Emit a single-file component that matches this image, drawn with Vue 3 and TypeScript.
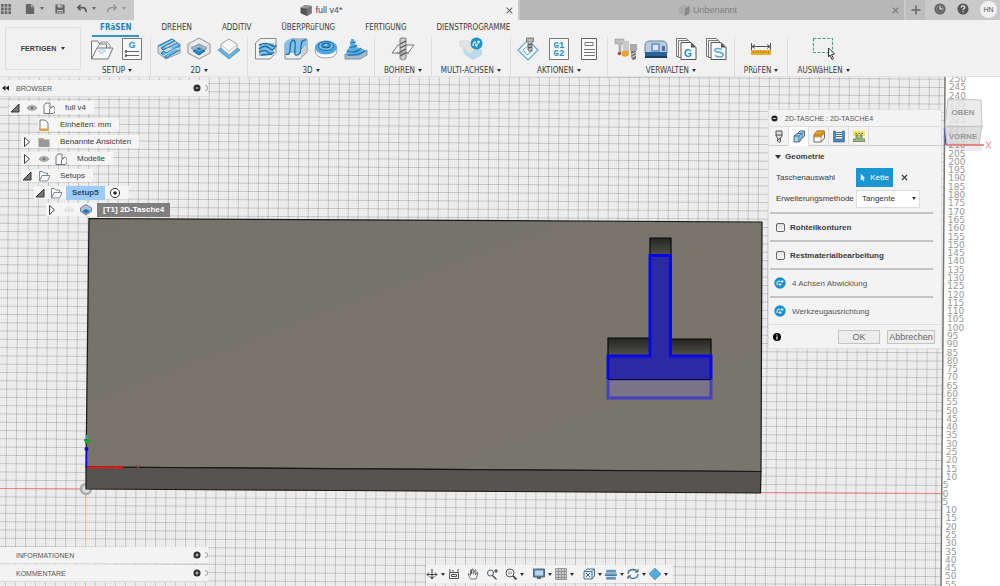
<script setup lang="ts">
import { ref } from 'vue'

interface Group {
  label: string
  icons: string[]
}

const quickIcons: Record<string, string> = {
  grid: '<g fill="#6a6a6a"><path d="M1 1h3v3H1zM5 1h3v3H5zM9 1h3v3H9zM1 5h3v3H1zM5 5h3v3H5zM9 5h3v3H9zM1 9h3v3H1zM5 9h3v3H5zM9 9h3v3H9z"/></g>',
  file: '<path d="M2 1h6l3 3v8H2z" fill="#666"/><path d="M8 1v3h3" fill="none" stroke="#ccc" stroke-width=".8"/>',
  save: '<path d="M1.500 1.500h9l1 1v9h-10z" fill="#666"/><path d="M4 2h5v3H4zM3.500 7.500h6v3h-6z" fill="#ccc"/><path d="M7 2h1v2H7zM4 9h5v1H4z" fill="#666"/>',
  undo: '<path d="M5 2 2 5l3 3M2.500 5H7q4 0 4 5" fill="none" stroke="#5d5d5d" stroke-width="1.800"/>',
  redo: '<path d="M8 2l3 3-3 3M10.500 5H6Q2 5 2 10" fill="none" stroke="#949494" stroke-width="1.600"/>',
  clock: '<circle cx="6.500" cy="6.500" r="6" fill="#5f5f5f"/><circle cx="6.500" cy="6.500" r="3.800" fill="none" stroke="#aaa" stroke-width=".6"/><path d="M6.500 3.500v3h3" fill="none" stroke="#eee" stroke-width="1.200"/>',
  help: '<circle cx="6.500" cy="6.500" r="6" fill="#555"/><path d="M4.600 5q.1-1.900 2-1.900t1.900 1.600q0 1-1.200 1.600-.7.400-.7 1.300" fill="none" stroke="#eee" stroke-width="1.300"/><circle cx="6.600" cy="9.400" r=".8" fill="#eee"/>'
}

const toolIcons: Record<string, string> = {
  setup: '<path d="M1.500 22V4h6l2 3h7v4M1.500 22 7 11h16l-5 11z" fill="#f8f8f8" stroke="#777"/><path d="M7 11l4-6h6l3 3v3" fill="none" stroke="#888" stroke-width=".9"/><path d="M8 14l5-2 3 2-5 3z" fill="#cfe6f4" stroke="#8fc4e3" stroke-width=".6"/>',
  nc: '<path d="M2.500 1.500h19v21h-19z" fill="#f7f7f7" stroke="#777"/><text x="12" y="10.500" text-anchor="middle" font-family="Liberation Sans, sans-serif" font-weight="700" font-size="9" fill="#268fd0">G</text><path d="M5 14.500h14M5 18.500h14" stroke="#666"/><path d="M6 13v3M6 17v3" stroke="#555" stroke-width="1.500"/>',
  face: '<path d="M1 9 15 2l8 5v9L9 22l-8-6z" fill="#d5dadd" stroke="#7c8a93" stroke-width=".8"/><path d="M1 9 15 2l3 2L4 11l2 2L20 6l3 3L9 16l-2-2-3 2 5 5 14-8" fill="#62b0e4" stroke="#1d74b2"/><path d="m3 10 13-7M7 14l14-7M3 16l3 3 14-8" stroke="#b4dbf3" fill="none"/>',
  pocket: '<path d="m12 1 11 6v9l-11 6L1 16V7z" fill="#e8eaec" stroke="#888" stroke-width=".9"/><path d="m12 7 8 4-8 7-8-7z" fill="#8fb8d4" stroke="#777" stroke-width=".7"/><path d="m12 11 6 3-6 4-6-4z" fill="#2187cd" stroke="#185b8c" stroke-width=".8"/><path d="M1 7l11 7 11-7" fill="none" stroke="#bbb" stroke-width=".7"/>',
  contour: '<path d="m12 5 11 8-11 9L1 13z" fill="#62b1e0" stroke="#3a9ad2" stroke-width=".8"/><path d="m12 2 8 5v4l-8 7-8-7V7z" fill="#f8f8f8" stroke="#999" stroke-width=".9"/><path d="m4 8 8 6 8-6M12 14v4" fill="none" stroke="#bbb" stroke-width=".8"/>',
  adaptive: '<path d="M1.500 6l5-4.500h15.500v14l-6 6.500H1.500z" fill="#f2f3f4" stroke="#888"/><path d="M5 8 20 6l-1 12-14 1z" fill="#83bfe6"/><path d="M5 8q7-3 12 0t5 0M5 12q6-5 10-1t6-1M5 15q6-3 9 0t6 0M7 18l11-1" fill="none" stroke="#1b6ead" stroke-width="1.500"/>',
  parallel: '<path d="M1 6l6-4h16v13l-7 7H1z" fill="#eceeef" stroke="#888"/><path d="M1 5q5-5 11-3t11 0v6q-6 12-10 9T1 18z" fill="#82c0e8"/><path d="M2 17Q6 19 6 12t3-9q3 0 2 8t2 7q4 0 4-8t5-7" fill="none" stroke="#1d6ca6" stroke-width="1.300"/><path d="m17 21 5-6V8l-5 5z" fill="#cdd0d2"/>',
  scallop: '<path d="M1 13q0 8 11 8t11-8q-1-3-3-3H4q-3 0-3 3z" fill="#fff" stroke="#999" stroke-width=".9"/><ellipse cx="12" cy="10.500" rx="11" ry="7" fill="#4ba5df"/><ellipse cx="12" cy="9" rx="7.500" ry="4.500" fill="#7fc0ea" stroke="#1869a6"/><ellipse cx="12" cy="8.500" rx="4.500" ry="2.300" fill="#3c94cf" stroke="#155985"/><ellipse cx="12" cy="8" rx="1.600" ry=".8" fill="#cfe8f7"/>',
  spiral: '<path d="m1 17 13-1 9-3v5l-7 4H1z" fill="#a8bccb" stroke="#6d8494" stroke-width=".8"/><path d="M7 2h3l1 5 3 4 5 1 3 2-7 5-13-2 1-4 3-3z" fill="#5bade2"/><path d="m6 6 6-1M5 10q5 1 8-2M3 14q9 3 14-3M3 18q11 1 18-4" fill="none" stroke="#1d70ac" stroke-width="1.200"/>',
  drill: '<path d="m1 16 6-8h16l-6 8z" fill="#fafafa" stroke="#777"/><path d="M9 1.500q3-1.500 6 0v20l-3 1.500-3-1.500z" fill="#cdcdcd" stroke="#777" stroke-width=".9"/><path d="m9 7 6-3M9 11l6-3M9 15l6-3M9 19l6-3" stroke="#555" stroke-width="1.300"/><path d="M6 16h12" stroke="#777"/>',
  multi: '<g opacity=".62"><path d="M1 4h9v5H7v6H4V9H1z" fill="#d9dcde" stroke="#bbb" stroke-width=".6"/><path d="m5 12 6 3 6-6 6 4v5l-9 5-9-6z" fill="#9acbe8"/><path d="m12 7-5 6 4 4 6-7z" fill="#e7d8ba"/></g><circle cx="17.500" cy="6.500" r="6" fill="#1b91cd"/><path d="M14 9q0-4 3-4M18 5h3M19.500 3.500v3M16 8h3M17.500 6.500V10" stroke="#d9f0fb" stroke-width="1.300" fill="none"/>',
  simulate: '<path d="m11 3 10 10-10 10L1 13z" fill="#f3f8fb" stroke="#56a5d8" stroke-width="1.100"/><path d="m16 13-6 5-4-5 6-5" fill="none" stroke="#56a5d8"/><path d="M9.500 1h7v3.500h-1.500V13l-2 2-2-2V4.500H9.500z" fill="#b5b5b5" stroke="#666" stroke-width=".8"/><path d="m11 8 4-1M11 11l4-1" stroke="#444"/>',
  post: '<path d="M2.500 1.500h19v21h-19z" fill="#f7f7f7" stroke="#777"/><text x="12" y="11" text-anchor="middle" font-family="Liberation Mono, monospace" font-weight="700" font-size="9" fill="#2a8dcc">G1</text><text x="12" y="19" text-anchor="middle" font-family="Liberation Mono, monospace" font-weight="700" font-size="9" fill="#2a8dcc">G2</text>',
  sheet: '<path d="M4.500 1.500h15v21h-15z" fill="#f9f9f9" stroke="#666"/><path d="M8 5.500h8v3H8zM7 12.500h11M7 15.500h11M7 18.500h11" fill="none" stroke="#777"/>',
  tools: '<path d="M1 2h9v5H7v8H5V7H1z" fill="#bdbdbd" stroke="#999" stroke-width=".6"/><circle cx="5.500" cy="16.500" r="1.800" fill="#d83c2e"/><path d="M9 4h6v10H9z" fill="#c9c9c9"/><path d="m8 14h7v4q-3 3-7 1z" fill="#e2a52c"/><path d="M16 7h7v7h-7z" fill="#aaa"/><path d="M17 14h5v8l-3 1-2-2z" fill="#777"/><path d="m17 18 5-3M17 21l5-3" stroke="#ddd"/>',
  machine: '<path d="M1 9q0-5 5-5h12q5 0 5 5v7H1z" fill="#b9cde0" stroke="#68829c"/><path d="M1 15h22v5H1z" fill="#2a6497"/><path d="M7 6h9v9H7z" fill="#7b9fc7"/><path d="M9 8h5v5H9z" fill="#dfe8f2"/><path d="M18 9h3v5h-3z" fill="#536bb0"/><path d="M1 19h22v2H1z" fill="#174466"/>',
  library: '<path d="M2.500 1.500h10l3 3v15h-13z" fill="#f7f7f7" stroke="#777"/><path d="M4.500 3.500h10l3 3v14h-13z" fill="#f7f7f7" stroke="#777"/><path d="M7 5.500h10l5 5v12H7z" fill="#fbfbfb" stroke="#555"/><path d="M17 5.500v5h5z" fill="#555"/><text x="14" y="20" text-anchor="middle" font-family="Liberation Sans, sans-serif" font-weight="700" font-size="10" fill="#2389cb">G</text>',
  template: '<path d="M2.500 1.500h10l3 3v15h-13z" fill="#f7f7f7" stroke="#777"/><path d="M4.500 3.500h10l3 3v14h-13z" fill="#f7f7f7" stroke="#777"/><path d="M7 5.500h10l5 5v12H7z" fill="#fbfbfb" stroke="#555"/><path d="M17 5.500v5h5z" fill="#555"/><path d="M18 12.500q-6-2-7 0t3 2.500 5 2-1 2.500q-3 1.500-7-1" fill="none" stroke="#5aa9d9" stroke-width="1.500"/>',
  measure: '<path d="M2.500 6v8M21.500 6v8M3 9.500h18M6 7.500l-3 2 3 2M18 7.500l3 2-3 2" fill="none" stroke="#555"/><path d="M2 13h20v5H2z" fill="#e9ac2a"/><path d="M4 15h16" stroke="#9c721a" stroke-dasharray="1 1.500" stroke-width="1.500"/>',
  select: '<path d="M1.500 1.500h19v14h-19z" fill="none" stroke="#4ea374" stroke-width="1.100" stroke-dasharray="3 1.500"/><path d="m16.500 11 6 6-3 .5 2 4-1.500 1-2-4.500-1.500 2z" fill="#fff" stroke="#333"/>'
}

const groups: Group[] = [
  { label: 'SETUP', icons: ['setup', 'nc'] },
  { label: '2D', icons: ['face', 'pocket', 'contour'] },
  { label: '3D', icons: ['adaptive', 'parallel', 'scallop', 'spiral'] },
  { label: 'BOHREN', icons: ['drill'] },
  { label: 'MULTI-ACHSEN', icons: ['multi'] },
  { label: 'AKTIONEN', icons: ['simulate', 'post', 'sheet'] },
  { label: 'VERWALTEN', icons: ['tools', 'machine', 'library', 'template'] },
  { label: 'PRüFEN', icons: ['measure'] },
  { label: 'AUSWäHLEN', icons: ['select'] }
]

const tabs = ['FRäSEN', 'DREHEN', 'ADDITIV', 'ÜBERPRüFUNG', 'FERTIGUNG', 'DIENSTPROGRAMME']
const activeTab = ref('FRäSEN')

const treeIcons: Record<string, string> = {
  open: '<path d="M10 2v8H2z" fill="#777" stroke="#333"/>',
  closed: '<path d="m3.500 1.500 5 4.500-5 4.500z" fill="#fafafa" stroke="#444"/>',
  eye: '<path d="M.5 6Q6-.5 11.500 6 6 12.500.5 6z" fill="#999"/><circle cx="6" cy="6" r="2.300" fill="#777" stroke="#ddd" stroke-width=".8"/>',
  eyeoff: '<path d="M.5 6Q6-.5 11.500 6 6 12.500.5 6z" fill="#e2e2e2"/><circle cx="6" cy="6" r="2" fill="#d4d4d4" stroke="#f7f7f7"/>',
  body: '<path d="M1 3.500 3 1h4v5l3-2 2 2v4l-2 1.500H1z" fill="#f8f8f8" stroke="#777"/><path d="M6.500 11V7L9 5" fill="none" stroke="#777"/>',
  units: '<path d="M2 1h5l3 3v7H2z" fill="#fff" stroke="#777"/><path d="M1 9.500h10v2H1z" fill="#dfa12c"/>',
  folder: '<path d="M.5 2H5l1 1.500h5.500V11H.5z" fill="#999"/><path d="M.5 2H5l1 1.500H.5z" fill="#c4a876"/>',
  setup: '<path d="M1.500 11V1.500h3L6 3h3.500v2.500M1.500 11 4 5.500h8L9.500 11z" fill="#fafafa" stroke="#6c8290" stroke-width=".9"/>',
  radio: '<circle cx="6" cy="6" r="4.600" fill="#fff" stroke="#333"/><circle cx="6" cy="6" r="1.800" fill="#222"/>',
  pocket: '<path d="m6 .5 5.500 3.500v3.500L6 11 .5 7.500V4z" fill="#aac4d6" stroke="#667" stroke-width=".8"/><path d="m6 5 4 2-4 3-4-3z" fill="#1f78bc"/>'
}

interface TreeRow {
  id: string
  arrow?: 'open' | 'closed'
  icons: string[]
  label: string
  after?: string
}
const tree: TreeRow[] = [
  { id: 'root', arrow: 'open', icons: ['eye', 'body'], label: 'full v4' },
  { id: 'units', icons: ['units'], label: 'Einheiten: mm' },
  { id: 'views', arrow: 'closed', icons: ['folder'], label: 'Benannte Ansichten' },
  { id: 'models', arrow: 'closed', icons: ['eye', 'body'], label: 'Modelle' },
  { id: 'setups', arrow: 'open', icons: ['setup'], label: 'Setups' },
  { id: 'setup5', arrow: 'open', icons: ['setup'], label: 'Setup5', after: 'radio' },
  { id: 'op', arrow: 'closed', icons: ['eyeoff', 'pocket'], label: '[T1] 2D-Tasche4' }
]

const dialogTabs: { name: string; icon: string }[] = [
  { name: 'Werkzeug', icon: '<path d="M3 1h6v5L7.500 8v3.500L6 12.500 4.500 11V8L3 6z" fill="#ddd" stroke="#555"/><path d="M3 5h6M4.500 10l3-2" stroke="#444"/>' },
  { name: 'Geometrie', icon: '<path d="M1 6l2.500-2H5V3l2-2h4.500v5L9.500 8H8v2l-2 2H1z" fill="#a9d1ec" stroke="#2f6287" stroke-width=".9"/><path d="M1 6h5v6M6 6l2-2M5 3.500h4V8M9 3.500 11.500 1" fill="none" stroke="#2f6287" stroke-width=".8"/>' },
  { name: 'Höhen', icon: '<path d="M1 5l3-4h7.500v7L8 12H1z" fill="#fff" stroke="#666"/><path d="m1 5 3-4h7.500L8 5zM1 5h7l3.500-4v2L8 7H1z" fill="#e7a02b" stroke="#b77818" stroke-width=".6"/><path d="M8 7v5" stroke="#777" stroke-width=".8"/>' },
  { name: 'Durchgänge', icon: '<path d="M.5 1v11h11V1H9.500v8h-7V1z" fill="#4b86c6" stroke="#335f91" stroke-width=".6"/><path d="M3 2.500h6M3 4.500h6M3 6.500h6" stroke="#3e6da0"/>' },
  { name: 'Verknüpfung', icon: '<path d="M0 1h12v5H0z" fill="#e9e45a"/><path d="M0 11.500h12V9H9V5H7v4H5V5H3v4H0z" fill="#a3bd80" stroke="#557041" stroke-width=".7"/><path d="M2 3.500h8" stroke="#777" stroke-dasharray="2 1"/>' }
]
const activeDialogTab = ref('Geometrie')
const stock = ref(false)
const rest = ref(false)
const method = ref('Tangente')

const navItems: { id: string; icon: string; menu: boolean; gap?: boolean }[] = [
  { id: 'Orbit', menu: true, icon: '<path d="M6 1v10M4 8.500 6 11l2-2.500" fill="none" stroke="#333"/><path d="M1 6.500h10M3 4.500l-2 2 2 2M9 4.500l2 2-2 2" fill="none" stroke="#444"/>' },
  { id: 'Ansehen', menu: false, icon: '<path d="M1.500 4.500h9v6h-9zM3.500 6.500h5v2h-5zM2 1v3M5 2v2M10 1v3" fill="none" stroke="#555"/>' },
  { id: 'Pan', menu: false, icon: '<path d="m3.500 11-2.500-5 1-.5 1.500 2V2h1v4l.500-5h1l.500 5L8 2h1l-.500 5L10 4.500l1 .5-2 6z" fill="#fafafa" stroke="#555" stroke-width=".8"/>' },
  { id: 'Zoom', menu: false, icon: '<circle cx="4.500" cy="5" r="3" fill="#eef4f8" stroke="#555"/><path d="m6.500 7.500 4 4M8 3h4M10 1v4" stroke="#444" stroke-width="1.200"/>' },
  { id: 'Einpassen', menu: true, icon: '<circle cx="5" cy="5" r="4" fill="#f8f8f8" stroke="#555"/><path d="M3 3.500h4v3H3z" fill="#bbb"/><path d="m8 8 3.500 3.500" stroke="#333" stroke-width="1.600"/>' },
  { id: 'Anzeige', menu: true, gap: true, icon: '<path d="M.5 1h11v8H.5z" fill="#5d81a4" stroke="#486781"/><path d="M2 2.500h8v5H2z" fill="#b7d5ec"/><path d="M4 9h4v2H4z" fill="#666"/>' },
  { id: 'Raster', menu: true, icon: '<path d="M.5.5h11v11H.5zM3.500.5v11M6.500.5v11M9.500.5v11M.5 3.500h11M.5 6.500h11M.5 9.500h11" fill="#ccc" stroke="#888" stroke-width=".8"/>' },
  { id: 'Objekt', menu: true, gap: true, icon: '<path d="M1 3.500 4 1h7.500v7L9 11H1z" fill="#e5eef5" stroke="#456f91"/><path d="M1 3.500h8V11M9 3.500 11.500 1M3 5l4 4M7 5 3 9" fill="none" stroke="#456f91"/>' },
  { id: 'Schnitt', menu: true, icon: '<path d="M1 1.500h10V4H1zM0 5h12v2.500H0zM1 8.500h10V11H1z" fill="#5a9bd0" stroke="#f3f3f3" stroke-width=".5"/><path d="M1 4h10M0 7.500h12M1 11h10" stroke="#355974" stroke-width=".8"/>' },
  { id: 'Aktualisieren', menu: true, icon: '<path d="M1 6q0-4 5-4.500 3 0 4 2M11 6q0 4-5 4.500-3 0-4-2" fill="none" stroke="#3979ab" stroke-width="1.300"/><path d="M8 4h3V1M4 8H1v3" fill="none" stroke="#444"/>' },
  { id: 'Stil', menu: true, icon: '<path d="m6 0 6 6-6 6-6-6z" fill="#55aadd" stroke="#3d8cbd" stroke-width=".6"/>' }
]

const TILT = 0.0055
const LEAN = 0.008
function rows(step: number): string {
  let d = ''
  for (let y = 489 - step * Math.ceil(420 / step); y < 600; y += step) {
    d += `M0 ${(y - 86 * TILT).toFixed(2)}L${edge(y).toFixed(1)} ${(y + 858 * TILT).toFixed(2)}`
  }
  return d
}
function columns(step: number): string {
  let d = ''
  for (let x = 86 - step * Math.ceil(90 / step); x < 940; x += step) {
    d += `M${(x + 412 * LEAN).toFixed(2)} 77L${(x - 97 * LEAN).toFixed(2)} 586`
  }
  return d
}
function edge(y: number): number {
  return 945 - (y - 77) * LEAN
}
const minorGrid = rows(8.29 / 5) + columns(2)
const majorGrid = rows(8.29) + columns(10)

const ruler = Array.from({ length: 62 }, (_, i) => {
  const value = 250 - i * 5
  const y = 82 + i * 8.29
  return { key: value, text: String(Math.abs(value)), x: edge(y) + (Math.abs(value) > 5 ? 4 : 1), y }
})
</script>

<template>
  <div class="app">
    <header class="titlebar">
      <div class="quick">
        <button aria-label="Datengruppe"><svg viewBox="0 0 13 13" v-html="quickIcons.grid" /></button>
        <button class="file" aria-label="Datei"><svg viewBox="0 0 13 13" v-html="quickIcons.file" /><i class="caret" /></button>
        <button aria-label="Speichern"><svg viewBox="0 0 13 13" v-html="quickIcons.save" /></button>
        <button aria-label="Rückgängig"><svg viewBox="0 0 13 13" v-html="quickIcons.undo" /><i class="caret" /></button>
        <button class="dim" aria-label="Wiederholen"><svg viewBox="0 0 13 13" v-html="quickIcons.redo" /><i class="caret" /></button>
      </div>
      <div class="doc current">
        <span class="doc-name">
          <svg viewBox="0 0 12 12"><path d="M0 3 5 0l7 1v8l-5 3-7-3z" fill="#555" /><path d="m0 3 5-3 7 1-5 3z" fill="#999" /><path d="m7 4 5-3v8l-5 3z" fill="#777" /></svg>
          full v4*
        </span>
        <button class="close" aria-label="Schließen"><svg viewBox="0 0 8 8"><path d="m1.500 1.500 5 5m0-5-5 5" stroke="#666" /></svg></button>
      </div>
      <div class="doc">
        <span class="doc-name">
          <svg viewBox="0 0 12 12"><path d="M0 3 5 0l7 1v8l-5 3-7-3z" fill="#aaa" /><path d="m7 4 5-3v8l-5 3z" fill="#888" /></svg>
          Unbenannt
        </span>
        <button class="close" aria-label="Schließen"><svg viewBox="0 0 8 8"><path d="m1.500 1.500 5 5m0-5-5 5" stroke="#777" /></svg></button>
      </div>
      <div class="account">
        <button class="plus" aria-label="Neu"><svg viewBox="0 0 12 12"><path d="M6 1.500v9M1.500 6h9" stroke="#666" stroke-width="1.500" /></svg></button>
        <button aria-label="Auftragsstatus"><svg viewBox="0 0 13 13" v-html="quickIcons.clock" /></button>
        <button aria-label="Hilfe"><svg viewBox="0 0 13 13" v-html="quickIcons.help" /></button>
        <button class="avatar">HN</button>
      </div>
    </header>

    <div class="ribbon">
      <button class="workspace-switch">FERTIGEN<i class="caret" /></button>
      <div class="ribbon-main">
        <nav class="tabs">
          <button v-for="t in tabs" :key="t" :class="{ active: t === activeTab }" @click="activeTab = t">{{ t }}</button>
        </nav>
        <div class="groups">
          <div v-for="g in groups" :key="g.label" class="group">
            <div class="tools">
              <button v-for="i in g.icons" :key="i" :aria-label="i"><svg viewBox="0 0 24 24" v-html="toolIcons[i]" /></button>
            </div>
            <button class="group-label">{{ g.label }}<i class="caret" /></button>
          </div>
        </div>
      </div>
    </div>

    <main class="workspace">
      <svg class="scene" viewBox="0 77 1000 509" preserveAspectRatio="xMinYMin slice">
        <defs>
          <linearGradient id="face" x1="0" x2="1" y1="0" y2="1">
            <stop offset="0" stop-color="#75726a" />
            <stop offset="0.6" stop-color="#79756b" />
            <stop offset="1" stop-color="#78756c" />
          </linearGradient>
          <linearGradient id="slot" x1="0" x2="0" y1="0" y2="1">
            <stop offset="0" stop-color="#242422" />
            <stop offset="1" stop-color="#53524c" />
          </linearGradient>
        </defs>
        <rect y="77" width="1000" height="509" fill="#fff" />
        <path d="M0 77H945L941 586H0z" fill="#f4f4f4" />
        <path :d="minorGrid" stroke="#000" stroke-opacity="0.03" fill="none" />
        <path :d="majorGrid" stroke="#000" stroke-opacity="0.16" fill="none" />
        <path d="M945 77 941 586" stroke="#777" stroke-width="1.500" />
        <path d="M0 488.500 943 493.500" stroke="#f08080" />
        <path d="M85.500 489V586M88 219l-1-22" stroke="#90ee90" />
        <circle cx="86" cy="489" r="5" fill="#ddd" stroke="#aaa" stroke-width="2.500" />
        <path d="m89 218.500 673 3.500-1 249.500L86 467z" fill="url(#face)" stroke="#181818" stroke-width="1.200" />
        <path d="m86 467 675 4.500-.5 21.500L86 489z" fill="#555450" stroke="#181818" stroke-width="1.200" />
        <path d="M86.500 467v-20" stroke="#0909f0" stroke-width="1.500" />
        <circle cx="86.500" cy="449" r="2" fill="#0909d8" />
        <path d="M86.500 435v4" stroke="#21a6c7" stroke-width="2" />
        <path d="m84 440 5 1-4 2" stroke="#0daa20" stroke-width="2" fill="none" />
        <path d="M87 467.500h34" stroke="#ed1515" stroke-width="2" />
        <path d="m119 465 5 2.500-5 2.500z" fill="#e31616" />
        <path d="m136 465 4 4m0-4-4 4" stroke="#9c3f3a" stroke-width=".8" />

        <g fill="url(#slot)" stroke="#080808" stroke-width="1.200">
          <path d="M650 238h21v18h-21z" />
          <path d="M608 338h42v18h-42z" />
          <path d="M670 339h41v17h-41z" />
        </g>
        <rect x="608" y="379" width="103" height="19" fill="#7b7386" stroke="#453fc2" stroke-width="3" />
        <path d="M650 255h20v101h41v23H608v-23h42z" fill="#2c29a4" />
        <path d="M608 379v-23h42V255.500h20.500V356H711v23" fill="none" stroke="#0808e4" stroke-width="3" />
        <path d="M608 379.500h103" stroke="#0c0c38" stroke-width="1.200" />

        <g class="ruler">
          <text v-for="r in ruler" :key="r.key" :x="r.x" :y="r.y">{{ r.text }}</text>
        </g>

        <path d="m945 128 1 17" stroke="#4a42e4" stroke-width="1.500" />
        <path d="M950 151h32v-8h-36z" fill="#999" opacity="0.2" />
        <path d="m948 99 33 1 1 27-37-1z" fill="#e6e6e6" fill-opacity="0.82" stroke="#bbb" stroke-width=".8" />
        <path d="m945 127 37-1-3 19-32-1z" fill="#d8d8d8" fill-opacity="0.85" stroke="#bbb" stroke-width=".8" />
        <path d="M946 145h38" stroke="#ec6a6a" stroke-width="1.500" />
        <g class="cube">
          <text x="963" y="115">OBEN</text>
          <text x="963" y="139">VORNE</text>
        </g>
        <path d="m986 141.500 5 7m0-7-5 7" stroke="#f19a9a" stroke-width="1.200" />
      </svg>

      <section class="browser">
        <h2 class="bar">
          <svg class="rewind" viewBox="0 0 8 6"><path d="M4 0v6L0 3zM8 0v6L4 3z" fill="#222" /></svg>
          BROWSER
          <button class="dot" aria-label="Ausblenden"><svg viewBox="0 0 8 8"><circle cx="4" cy="4" r="3.500" fill="#2d2d2d" /><path d="M2.500 4h3" stroke="#ddd" /></svg></button>
          <span class="grip" />
        </h2>
        <ul class="tree">
          <li v-for="row in tree" :key="row.id" :class="row.id">
            <button v-if="row.arrow" class="arrow" :aria-label="row.arrow"><svg viewBox="0 0 12 12" v-html="treeIcons[row.arrow]" /></button>
            <svg v-for="i in row.icons" :key="i" viewBox="0 0 12 12" v-html="treeIcons[i]" />
            <span class="name">{{ row.label }}</span>
            <svg v-if="row.after" viewBox="0 0 12 12" v-html="treeIcons[row.after]" />
          </li>
        </ul>
      </section>

      <section class="dialog">
        <h2 class="dialog-title">
          <svg viewBox="0 0 8 8"><circle cx="4" cy="4" r="3.500" fill="#222" /><path d="M2 4h4" stroke="#ddd" /></svg>
          2D-TASCHE : 2D-TASCHE4
        </h2>
        <div class="dialog-tabs">
          <button v-for="t in dialogTabs" :key="t.name" :aria-label="t.name" :class="{ active: t.name === activeDialogTab }" @click="activeDialogTab = t.name">
            <svg viewBox="0 0 12 13" v-html="t.icon" />
          </button>
        </div>
        <div class="dialog-body">
          <h3><i class="caret" />Geometrie</h3>
          <div class="field">
            <span>Taschenauswahl</span>
            <div class="control">
              <button class="chain"><svg viewBox="0 0 8 10"><path d="m1 0 6 6H4.500L6 9l-1.500 1L3 7 1 9z" fill="#e8f6fd" /></svg>Kette</button>
              <button class="clear" aria-label="Auswahl löschen"><svg viewBox="0 0 8 8"><path d="m1 1 6 6m0-6-6 6" stroke="#333" stroke-width="1.500" /></svg></button>
            </div>
          </div>
          <div class="field">
            <label for="method">Erweiterungsmethode</label>
            <div class="control select">
              <select id="method" v-model="method"><option>Tangente</option></select>
              <i class="caret" />
            </div>
          </div>
          <label class="option"><input v-model="stock" type="checkbox">Rohteilkonturen</label>
          <label class="option"><input v-model="rest" type="checkbox">Restmaterialbearbeitung</label>
          <button v-for="x in ['4 Achsen Abwicklung', 'Werkzeugausrichtung']" :key="x" class="option extension">
            <svg viewBox="0 0 12 12"><circle cx="6" cy="6" r="5.700" fill="#1b8fc6" /><path d="M3 8q-.5-4 3-4M6.500 4.500h3M8 3v3M4.500 7.500h3M6 6v3" fill="none" stroke="#e2f4fc" stroke-width="1.100" /></svg>{{ x }}
          </button>
        </div>
        <footer>
          <svg viewBox="0 0 8 8"><circle cx="4" cy="4" r="4" fill="#000" /><path d="M4 3.500V6.500M4 1.500v1" stroke="#fff" stroke-width="1.300" /></svg>
          <button class="ok">OK</button>
          <button>Abbrechen</button>
        </footer>
      </section>

      <section class="bottom-panels">
        <h2 v-for="p in ['INFORMATIONEN', 'KOMMENTARE']" :key="p" class="bar">
          {{ p }}
          <button class="dot" aria-label="Einblenden"><svg viewBox="0 0 8 8"><circle cx="4" cy="4" r="3.500" fill="#2d2d2d" /><path d="M2.500 4h3M4 2.500v3" stroke="#ddd" /></svg></button>
          <span class="grip" />
        </h2>
      </section>

      <nav class="navbar">
        <button v-for="n in navItems" :key="n.id" :aria-label="n.id" :class="{ gap: n.gap }">
          <svg viewBox="0 0 12 12" v-html="n.icon" /><i v-if="n.menu" class="caret" />
        </button>
      </nav>
    </main>
  </div>
</template>

<style>
html, body { margin: 0; overflow: hidden; }
</style>

<style scoped>
.app {
  display: flex;
  flex-direction: column;
  height: 100vh;
  font-family: "Liberation Sans", Arial, sans-serif;
  font-size: 8px;
  color: #3c3c3c;
}
.app * { box-sizing: border-box; }
button {
  display: flex;
  align-items: center;
  justify-content: center;
  padding: 0;
  border: 0;
  background: none;
  font: inherit;
  color: inherit;
  white-space: nowrap;
}
svg { display: block; flex: none; }
h2, h3, ul { margin: 0; padding: 0; }
.caret {
  flex: none;
  border: 2px solid transparent;
  border-top: 3px solid #333;
  border-bottom: 0;
}

.titlebar { display: flex; height: 20px; flex: none; background: #c9c9c9; }
.quick { display: flex; align-items: center; width: 134px; padding-bottom: 3px; gap: 10px; }
.quick svg { width: 12px; height: 12px; }
.quick button { gap: 4px; }
.quick .file { margin-left: 2px; }
.quick .caret { border-top-color: #666; }
.quick .dim .caret { border-top-color: #999; }
.doc {
  flex: 1;
  display: flex;
  align-items: center;
  padding: 0 4px;
  margin-right: 2px;
  background: #b7b7b7;
  color: #808080;
  font-size: 9px;
}
.doc.current { background: #f2f2f2; color: #484848; }
.doc-name { flex: 1; display: flex; align-items: center; justify-content: center; gap: 3px; }
.doc-name svg { width: 12px; height: 11px; }
.close svg { width: 9px; height: 9px; }
.account { display: flex; align-items: center; gap: 11px; width: 94px; padding-bottom: 2px; }
.account svg { width: 12px; height: 12px; }
.account .plus { width: 19px; height: 20px; margin: 2px -2px 0 0; background: #bdbdbd; }
.account .avatar { width: 17px; height: 17px; border-radius: 50%; background: #f1f1f1; font-size: 7px; color: #555; }

.ribbon { display: flex; flex: none; height: 57px; background: #f1f1f1; border-bottom: 1px solid #e2e2e2; }
.workspace-switch {
  width: 76px;
  height: 43px;
  margin: 7px 3px 0 5px;
  border: 1px solid #dedede;
  border-radius: 2px;
  gap: 5px;
  font-size: 7px;
  font-weight: 700;
}
.ribbon-main { flex: 1; min-width: 0; }
.tabs { display: flex; gap: 14px; height: 17px; padding-left: 8px; }
.tabs button {
  padding: 0 8px;
  border-bottom: 2px solid transparent;
  font-family: "DejaVu Sans Condensed", "Liberation Sans", sans-serif;
  font-size: 8px;
}
.tabs .active { border-color: #3095cf; color: #1787c6; font-weight: 700; }
.groups { display: flex; height: 39px; }
.group {
  display: flex;
  flex-direction: column;
  justify-content: space-between;
  padding: 0 6px;
  border-right: 1px solid #dcdcdc;
}
.group:last-child { border: 0; }
.tools { display: flex; justify-content: center; gap: 6px; }
.tools svg { width: 24px; height: 24px; }
.group-label {
  gap: 3px;
  height: 12px;
  padding: 0 3px;
  font-family: "DejaVu Sans Condensed", "Liberation Sans", sans-serif;
}

.workspace { position: relative; flex: 1; min-height: 0; overflow: hidden; }
.scene { width: 100%; height: 100%; }
.ruler text { font-family: "DejaVu Sans", sans-serif; font-size: 9px; fill: #999; }
.cube text { font-family: "Liberation Sans", sans-serif; font-size: 8px; font-weight: 700; fill: #999; text-anchor: middle; }

.bar {
  display: flex;
  align-items: center;
  width: 208px;
  height: 17px;
  padding-left: 16px;
  background: #f3f3f3;
  border-bottom: 1px solid #ddd;
  font-size: 7px;
  font-weight: 400;
  color: #555;
}
.bar .dot { margin-left: auto; }
.dot svg { width: 8px; height: 8px; }
.grip { width: 3px; height: 6px; margin: 0 0 0 4px; border: 1px solid #aaa; border-left: 0; border-radius: 0 3px 3px 0; }
.browser { position: absolute; left: 0; top: 3px; }
.browser .bar { padding-left: 2px; }
.rewind { width: 7px; height: 6px; margin-right: 7px; }
.tree { list-style: none; padding-top: 2px; }
.tree li {
  display: flex;
  align-items: center;
  width: max-content;
  height: 17px;
  padding-right: 8px;
  gap: 5px;
  background: linear-gradient(#f5f5f5, #f5f5f5) center / 100% 13px no-repeat;
}
.tree svg { width: 12px; height: 12px; }
.tree .name { margin-left: 5px; line-height: 10px; }
.tree .root { margin-left: 9px; }
.tree .units { margin-left: 38px; }
.tree .views, .tree .models, .tree .setups { margin-left: 21px; }
.tree .setup5 { margin-left: 34px; gap: 4px; }
.tree .op { margin-left: 46px; padding-right: 0; }
.tree .setup5 .name { margin-left: 0; padding: 2px 6px; background: #9dccfb; font-weight: 700; color: #2b4a6b; }
.tree .op .name { margin-left: 0; padding: 2px 6px; background: #7f7f7f; font-weight: 700; color: #fff; }

.dialog {
  position: absolute;
  top: 32px;
  right: 58px;
  width: 174px;
  background: #f3f3f3;
  border: 1px solid #e0e0e0;
}
.dialog-title {
  display: flex;
  align-items: center;
  gap: 7px;
  height: 16px;
  padding-left: 2px;
  font-size: 7px;
  font-weight: 400;
  color: #555;
}
.dialog-title svg { width: 7px; height: 7px; }
.dialog-tabs { display: flex; height: 20px; border-top: 1px solid #ddd; border-bottom: 1px solid #ccc; }
.dialog-tabs button { width: 20px; height: 19px; border-right: 1px solid #ddd; }
.dialog-tabs .active { background: #fff; }
.dialog-tabs svg { width: 12px; height: 13px; }
.dialog-body { padding: 0 8px 0 1px; }
.dialog h3 { display: flex; align-items: center; gap: 4px; height: 21px; padding-left: 5px; font-size: 8px; }
.dialog h3 .caret { border-width: 4px 3px 0; }
.field { display: flex; align-items: center; height: 21px; padding-left: 6px; }
.field > :first-child { width: 80px; white-space: nowrap; }
.control { position: relative; display: flex; align-items: center; gap: 8px; }
.chain { width: 37px; height: 19px; gap: 4px; background: #1a96d3; color: #fff; }
.chain svg { width: 6px; height: 9px; }
.clear svg { width: 7px; height: 7px; }
.select { width: 64px; }
.select select {
  width: 64px;
  height: 18px;
  padding: 0 5px;
  appearance: none;
  border: 1px solid #ddd;
  border-radius: 0;
  background: #fff;
  font: inherit;
  color: #333;
}
.select .caret { position: absolute; right: 4px; }
.option {
  display: flex;
  align-items: center;
  justify-content: flex-start;
  width: 100%;
  height: 28px;
  padding-left: 5px;
  border-top: 2px solid #c4c4c4;
  font-weight: 700;
}
.field + .option { margin-top: 3px; }
.option input {
  width: 9px;
  height: 9px;
  margin: 0 5px 0 1px;
  appearance: none;
  border: 1px solid #666;
  border-radius: 2px;
  background: linear-gradient(#ddd, #fff);
}
.option input:checked { background: #1a96d3; }
.extension { font-weight: 400; color: #555; gap: 6px; padding-left: 4px; }
.extension svg { width: 12px; height: 12px; }
.dialog footer { display: flex; align-items: center; gap: 7px; height: 24px; padding: 0 6px 0 4px; border-top: 1px solid #ddd; }
.dialog footer svg { width: 8px; height: 8px; margin-right: auto; }
.dialog footer button { width: 48px; height: 14px; border: 1px solid #c4c4c4; background: #ededed; font-size: 9px; color: #666; }
.dialog footer .ok { width: 42px; }

.bottom-panels { position: absolute; left: 0; bottom: 4px; display: grid; gap: 1px; }
.navbar {
  position: absolute;
  left: calc(50% - 74px);
  bottom: 3px;
  display: flex;
  align-items: center;
  gap: 7px;
  height: 18px;
  padding: 0 6px 0 0;
  background: #f3f3f3;
}
.navbar { gap: 4px; }
.navbar svg { width: 12px; height: 12px; margin-right: 3px; }
.navbar button { gap: 0; }
.navbar .caret { margin-right: -1px; }
.navbar .gap { margin-left: 6px; }
</style>
